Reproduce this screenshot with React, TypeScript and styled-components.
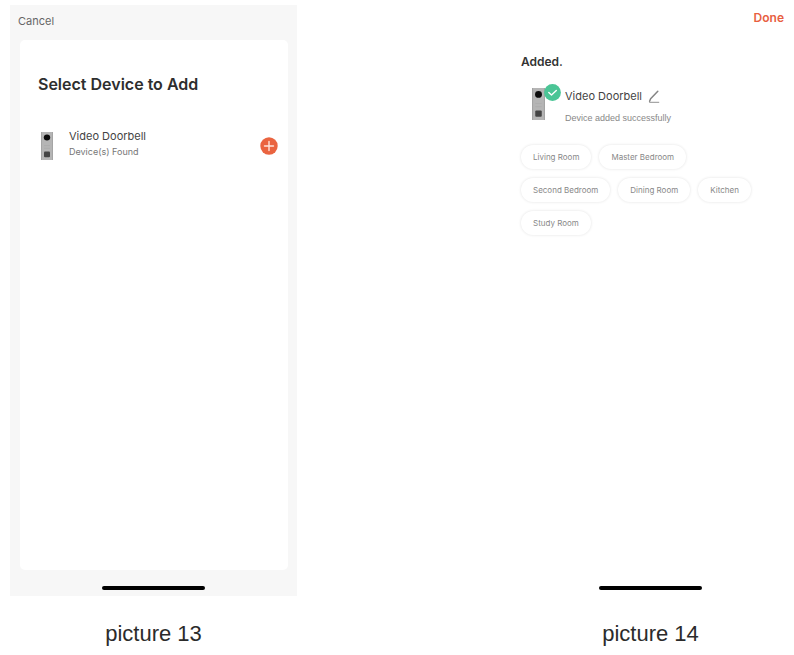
import React from "react";
import styled, { createGlobalStyle } from "styled-components";

const GlobalStyle = createGlobalStyle`
  *, *::before, *::after { box-sizing: border-box; }
  body {
    margin: 0;
    background: #fff;
    color: #333;
    font-family: Inter, "Liberation Sans", sans-serif;
  }
  button { font: inherit; color: inherit; background: none; border: 0; padding: 0; cursor: pointer; }
  h1, h2, p, figure, ul { margin: 0; padding: 0; }
`;

const Page = styled.main`
  display: grid;
  grid-template-columns: repeat(2, minmax(0, 1fr));
  column-gap: 210px;
  padding: 5px 0 0 10px;
`;

const Figure = styled.figure`
  display: flex;
  flex-direction: column;
`;

const Caption = styled.figcaption`
  margin-top: 24px;
  font: 22px/28px "Liberation Sans", Arial, sans-serif;
  color: #2b2b2b;
  text-align: center;
`;

const Screen = styled.section<{ $tinted?: boolean }>`
  display: flex;
  flex-direction: column;
  min-height: 591px;
  background: ${(p) => (p.$tinted ? "#f7f7f7" : "#fff")};
`;

const TopBar = styled.header<{ $end?: boolean }>`
  display: flex;
  justify-content: ${(p) => (p.$end ? "flex-end" : "flex-start")};
  align-items: center;
  height: 35px;
  padding: 0 8px 4px;
`;

const CancelButton = styled.button`
  font-size: 11px;
  line-height: 16px;
  color: #666;
`;

const DoneButton = styled.button`
  margin: 0 2px 6px 0;
  font-size: 12px;
  line-height: 16px;
  font-weight: 600;
  color: #e8603f;
`;

const Card = styled.div`
  flex: 1;
  margin: 0 9px 0 10px;
  padding: 32px 10px 0 18px;
  border-radius: 5px;
  background: #fff;
`;

const CardTitle = styled.h1`
  font-size: 16px;
  line-height: 24px;
  font-weight: 600;
  color: #2e2e2e;
`;

const DeviceRow = styled.div`
  display: flex;
  align-items: center;
  margin-top: 36px;
`;

const DeviceThumb = styled.span`
  display: block;
  width: 31px;
  padding-left: 3px;
  svg { display: block; }
`;

const DeviceText = styled.div`
  flex: 1;
  margin-top: -4px;
`;

const DeviceName = styled.p`
  font-size: 11px;
  line-height: 16px;
  color: #444;
`;

const DeviceNote = styled.p<{ $muted?: boolean }>`
  font-size: 9px;
  line-height: 16px;
  color: ${(p) => (p.$muted ? "#888" : "#777")};
  ${(p) => p.$muted && `font-family: "Liberation Sans", Arial, sans-serif;`}
`;

const IconButton = styled.button`
  display: block;
  svg { display: block; }
`;

const AddedBody = styled.div`
  flex: 1;
  padding: 12px 24px 0 14px;
`;

const AddedTitle = styled.h2`
  font-size: 12px;
  line-height: 20px;
  font-weight: 600;
  color: #333;
`;

const AddedDevice = styled.div`
  display: flex;
  margin: 12px 0 0 11px;
`;

const AddedThumb = styled.span`
  position: relative;
  width: 33px;
  padding-top: 4px;
`;

const SuccessBadge = styled.svg`
  position: absolute;
  top: 0;
  left: 12px;
`;

const NameLine = styled.div`
  display: flex;
  align-items: center;
  gap: 6px;
  height: 24px;
  margin-bottom: 2px;
`;

const Rooms = styled.ul`
  display: flex;
  flex-wrap: wrap;
  gap: 8px;
  margin-top: 18px;
  list-style: none;
`;

const RoomButton = styled.button`
  height: 24px;
  padding: 0 12px;
  border-radius: 12px;
  background: #fff;
  box-shadow: 0 0 3px rgba(0, 0, 0, 0.12);
  font-size: 8px;
  line-height: 24px;
  color: #888;
  white-space: nowrap;
`;

const HomeBar = styled.div`
  width: 36%;
  height: 4px;
  margin: 16px auto 6px;
  border-radius: 2px;
  background: #000;
`;

function Doorbell({ width, height }: { width: number; height: number }) {
  return (
    <svg width={width} height={height} viewBox="0 0 12 30" preserveAspectRatio="none" aria-hidden="true">
      <rect width="12" height="30" fill="#b5b5b5" />
      <path d="M.5 0v30M11.5 0v30" stroke="#a4a4a4" />
      <circle cx="6" cy="6" r="3.2" fill="#0b0b0b" />
      <path d="M3 14.5h6M3 17.5h6" stroke="#a9a9a9" strokeWidth=".6" />
      <rect x="3" y="21" width="6" height="6" rx="1" fill="#444" />
    </svg>
  );
}

const rooms = ["Living Room", "Master Bedroom", "Second Bedroom", "Dining Room", "Kitchen", "Study Room"];

export default function App() {
  return (
    <>
      <GlobalStyle />
      <Page>
        <Figure>
          <Screen $tinted>
            <TopBar>
              <CancelButton type="button">Cancel</CancelButton>
            </TopBar>
            <Card>
              <CardTitle>Select Device to Add</CardTitle>
              <DeviceRow>
                <DeviceThumb>
                  <Doorbell width={12} height={28} />
                </DeviceThumb>
                <DeviceText>
                  <DeviceName>Video Doorbell</DeviceName>
                  <DeviceNote>Device(s) Found</DeviceNote>
                </DeviceText>
                <IconButton type="button" aria-label="Add Video Doorbell">
                  <svg width="18" height="18" viewBox="0 0 18 18">
                    <circle cx="9" cy="9" r="8.7" fill="#ea6440" />
                    <path d="M4.5 9h9M9 4.5v9" stroke="#ffe5dc" strokeWidth="1.4" strokeLinecap="round" />
                  </svg>
                </IconButton>
              </DeviceRow>
            </Card>
            <HomeBar />
          </Screen>
          <Caption>picture 13</Caption>
        </Figure>

        <Figure>
          <Screen>
            <TopBar $end>
              <DoneButton type="button">Done</DoneButton>
            </TopBar>
            <AddedBody>
              <AddedTitle>Added.</AddedTitle>
              <AddedDevice>
                <AddedThumb>
                  <Doorbell width={13} height={32} />
                  <SuccessBadge width="17" height="17" viewBox="0 0 17 17" aria-hidden="true">
                    <circle cx="8.5" cy="8.5" r="8.4" fill="#4bc596" />
                    <path d="M4.8 8.6l2.7 2.5 4.8-4.6" fill="none" stroke="#fff" strokeWidth="1.4" strokeLinecap="round" strokeLinejoin="round" />
                  </SuccessBadge>
                </AddedThumb>
                <div>
                  <NameLine>
                    <DeviceName>Video Doorbell</DeviceName>
                    <IconButton type="button" aria-label="Rename device">
                      <svg width="12" height="13" viewBox="0 0 12 13" fill="none" stroke="#858585">
                        <path d="M9.8 1.2L2.6 8.8l-1 2.4" strokeWidth="1.5" strokeLinejoin="round" strokeLinecap="round" />
                        <path d="M1.2 12.3h10" strokeWidth=".9" />
                      </svg>
                    </IconButton>
                  </NameLine>
                  <DeviceNote $muted>Device added successfully</DeviceNote>
                </div>
              </AddedDevice>
              <Rooms>
                {rooms.map((room) => (
                  <li key={room}>
                    <RoomButton type="button">{room}</RoomButton>
                  </li>
                ))}
              </Rooms>
            </AddedBody>
            <HomeBar />
          </Screen>
          <Caption>picture 14</Caption>
        </Figure>
      </Page>
    </>
  );
}
